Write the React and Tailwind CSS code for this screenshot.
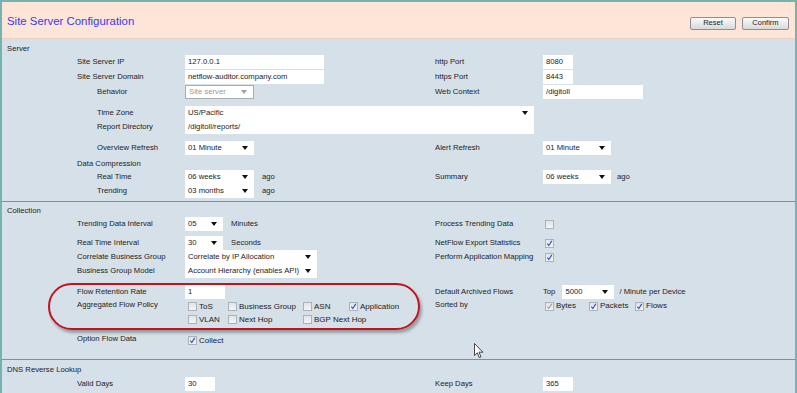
import React from 'react';

const Input = ({ w, value }) => (
  <div className={`h-[14px] bg-white pl-[3px] flex items-center shrink-0 whitespace-nowrap overflow-hidden ${w}`}>{value}</div>
);

const Select = ({ w, value, disabled }) => (
  <div
    className={`h-[14px] flex items-center justify-between pl-[3px] pr-[6px] shrink-0 whitespace-nowrap bg-white ${w} ${
      disabled ? 'border border-[#a9adb2] text-[#9a9a9a]' : ''
    }`}
  >
    <span>{value}</span>
    <svg width="6" height="4" viewBox="0 0 6 4">
      <path d="M0 0H6L3 4Z" fill={disabled ? '#a0a0a0' : '#111'} />
    </svg>
  </div>
);

const Check = ({ checked, disabled, label }) => (
  <div className="flex items-center gap-[2px] whitespace-nowrap">
    <span className="w-[9px] h-[9px] border border-[#adb2b6] bg-gradient-to-b from-[#e2e5e8] to-[#f3f4f5] flex items-center justify-center shrink-0">
      {checked && (
        <svg width="7" height="7" viewBox="0 0 8 8">
          <path
            d="M1.5 4.2 L3.2 6.3 L6.6 1"
            fill="none"
            stroke={disabled ? '#9ba3ad' : '#3550c8'}
            strokeWidth="1.3"
          />
        </svg>
      )}
    </span>
    {label && <span className="text-[8px]">{label}</span>}
  </div>
);

const Row = ({ sub, label, children, rlabel, right, className = 'h-[15px] items-center' }) => (
  <div className={`flex ${className}`}>
    <div className="flex items-center w-[428px] shrink-0">
      <div className={`${sub ? 'pl-[90px]' : 'pl-[70px]'} w-[178px] shrink-0 whitespace-nowrap`}>{label}</div>
      <div className="flex items-center gap-[8px]">{children}</div>
    </div>
    {rlabel !== undefined && <div className="w-[108px] shrink-0 whitespace-nowrap">{rlabel}</div>}
    <div className="flex items-center gap-[6px] whitespace-nowrap">{right}</div>
  </div>
);

const Divider = () => <div className="border-t border-[#868c92] mr-[-2px] ml-[-5px]" />;

export default function App() {
  return (
    <div className="relative w-[797px] h-[393px] overflow-hidden bg-[#d6e0e8] border-x-2 border-t-2 border-[#76b2ae] font-['Liberation_Sans',Arial,sans-serif] text-[7.7px] text-[#1c1c1c] leading-[12px]">
      {/* header */}
      <div className="h-[37px] bg-[#fde5d8] flex items-center justify-between pl-[5px] pr-[6px] border-b border-[#e9d2c5]">
        <div className="text-[11.4px] text-[#3a3aec] pt-[2px]">Site Server Configuration</div>
        <div className="flex gap-[6px] pt-[6px]">
          <button className="h-[13px] w-[46px] rounded-[2px] border border-[#8f8f8f] bg-gradient-to-b from-[#fbfbfb] to-[#d9d9d9] text-[7.5px] leading-none">
            Reset
          </button>
          <button className="h-[13px] w-[47px] rounded-[2px] border border-[#8f8f8f] bg-gradient-to-b from-[#fbfbfb] to-[#d9d9d9] text-[7.5px] leading-none">
            Confirm
          </button>
        </div>
      </div>

      <div className="pl-[5px]">
        {/* Server */}
        <div className="h-[11px] mt-[4px] leading-[11px]">Server</div>
        <Row label="Site Server IP" rlabel="http Port" right={<Input w="w-[30px]" value="8080" />}>
          <Input w="w-[139px]" value="127.0.0.1" />
        </Row>
        <Row label="Site Server Domain" rlabel="https Port" right={<Input w="w-[30px]" value="8443" />}>
          <Input w="w-[139px]" value="netflow-auditor.company.com" />
        </Row>
        <Row sub label="Behavior" rlabel="Web Context" right={<Input w="w-[100px]" value="/digitoll" />}>
          <Select w="w-[69px]" value="Site server" disabled />
        </Row>
        <Row sub label="Time Zone" className="h-[15px] items-center mt-[6px]">
          <Select w="w-[349px]" value="US/Pacific" />
        </Row>
        <Row sub label="Report Directory" className="h-[14px] items-center">
          <Input w="w-[349px]" value="/digitoll/reports/" />
        </Row>
        <Row
          sub
          label="Overview Refresh"
          rlabel="Alert Refresh"
          right={<Select w="w-[68px]" value="01 Minute" />}
          className="h-[15px] items-center mt-[6px]"
        >
          <Select w="w-[69px]" value="01 Minute" />
        </Row>
        <div className="h-[12px] mt-[3px] pl-[70px]">Data Compression</div>
        <Row
          sub
          label="Real Time"
          rlabel="Summary"
          right={
            <>
              <Select w="w-[68px]" value="06 weeks" />
              <span>ago</span>
            </>
          }
          className="h-[14px] items-center"
        >
          <Select w="w-[69px]" value="06 weeks" />
          <span>ago</span>
        </Row>
        <Row sub label="Trending" className="h-[14px] items-center">
          <Select w="w-[69px]" value="03 months" />
          <span>ago</span>
        </Row>
        <div className="mt-[3px]">
          <Divider />
        </div>

        {/* Collection */}
        <div className="h-[12px] mt-[3px]">Collection</div>
        <Row label="Trending Data Interval" rlabel="Process Trending Data" right={<div className="pl-[2px]"><Check /></div>} className="h-[14px] items-center">
          <Select w="w-[38px]" value="05" />
          <span>Minutes</span>
        </Row>
        <Row
          label="Real Time Interval"
          rlabel="NetFlow Export Statistics"
          right={<div className="pl-[2px]"><Check checked /></div>}
          className="h-[14px] items-center mt-[5px]"
        >
          <Select w="w-[38px]" value="30" />
          <span>Seconds</span>
        </Row>
        <Row
          label="Correlate Business Group"
          rlabel="Perform Application Mapping"
          right={<div className="pl-[2px]"><Check checked /></div>}
          className="h-[14px] items-center"
        >
          <Select w="w-[132px]" value="Correlate by IP Allocation" />
        </Row>
        <Row label="Business Group Model" className="h-[14px] items-center">
          <Select w="w-[132px]" value="Account Hierarchy (enables API)" />
        </Row>
        <Row
          label="Flow Retention Rate"
          rlabel="Default Archived Flows"
          right={
            <>
              <span className="pr-[1px]">Top</span>
              <Select w="w-[52px]" value="5000" />
              <span className="-ml-px">/ Minute per Device</span>
            </>
          }
          className="h-[14px] items-center mt-[7px]"
        >
          <Input w="w-[40px]" value="1" />
        </Row>
        <div className="flex h-[27px]">
          <div className="flex w-[428px] shrink-0">
            <div className="pl-[70px] w-[178px] shrink-0">Aggregated Flow Policy</div>
            <div className="grid grid-cols-[40px_75px_46px_auto] grid-rows-[13px_13px] items-center pl-[3px] pt-[1px]">
              <Check label="ToS" />
              <Check label="Business Group" />
              <Check label="ASN" />
              <Check checked label="Application" />
              <Check label="VLAN" />
              <Check label="Next Hop" />
              <Check label="BGP Next Hop" />
            </div>
          </div>
          <div className="w-[108px] shrink-0">Sorted by</div>
          <div className="grid grid-cols-[44px_46px_auto] h-[13px] items-center pl-[2px] pt-[1px]">
            <Check checked disabled label="Bytes" />
            <Check checked label="Packets" />
            <Check checked label="Flows" />
          </div>
        </div>
        <Row label="Option Flow Data" className="h-[14px] items-center mt-[6px]">
          <div className="pl-[3px] pt-[3px]">
            <Check checked label="Collect" />
          </div>
        </Row>
        <div className="mt-[13px]">
          <Divider />
        </div>

        {/* DNS */}
        <div className="h-[12px] mt-[4px]">DNS Reverse Lookup</div>
        <Row label="Valid Days" rlabel="Keep Days" right={<Input w="w-[30px]" value="365" />} className="h-[14px] items-center mt-[1px]">
          <Input w="w-[30px]" value="30" />
        </Row>
      </div>

      {/* annotation */}
      <div className="absolute left-[46px] top-[281px] w-[372px] h-[47px] rounded-full border-2 border-[#c4121c] shadow-[2px_3px_3px_rgba(0,0,0,0.3)] pointer-events-none" />

      {/* mouse cursor */}
      <svg className="absolute left-[472px] top-[341px]" width="10" height="16" viewBox="0 0 10 16">
        <path d="M0.5 0.5 L0.5 12.5 L3.3 9.8 L5.3 14.6 L7 13.9 L5 9.2 L8.9 9.2 Z" fill="#fff" stroke="#333" strokeWidth="0.9" strokeLinejoin="round" />
      </svg>
    </div>
  );
}
